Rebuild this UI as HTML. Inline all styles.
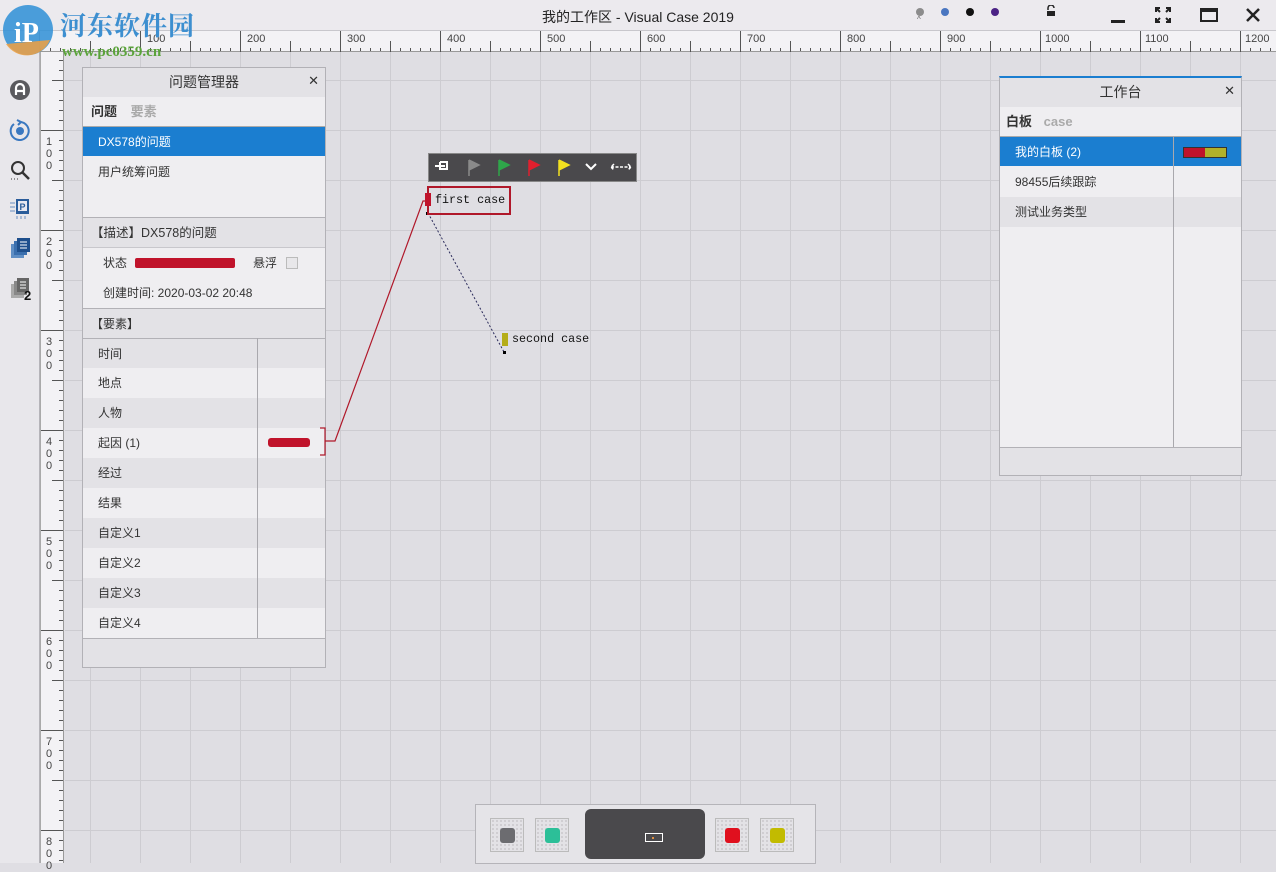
<!DOCTYPE html>
<html><head><meta charset="utf-8">
<style>
*{margin:0;padding:0;box-sizing:border-box}
body{width:1276px;height:863px;overflow:hidden;background:#dfdee3;font-family:"Liberation Sans","Noto Sans CJK SC",sans-serif;font-size:12px;color:#333;position:relative}
.abs{position:absolute}
#title{left:0;top:0;width:1276px;height:31px;background:#eceaee;border-bottom:1px solid #c8c7cc}
#side{left:0;top:31px;width:40px;height:832px;background:#e8e7eb;border-right:1px solid #b5b4b9}
#hr{left:40px;top:31px;width:1236px;height:21px;background:#f3f2f5;border-bottom:1px solid #999;
 background-image:repeating-linear-gradient(90deg,#555 0 1px,transparent 1px 10px);background-size:100% 4px;background-repeat:no-repeat;background-position:0 17px}
#vr{left:40px;top:52px;width:24px;height:811px;background:#f3f2f5;border-right:1px solid #999;border-left:1px solid #aaa}
#canvas{left:65px;top:52px;width:1211px;height:811px;
 background-color:#dfdee3;
 background-image:linear-gradient(90deg,#cdccd1 1px,transparent 1px),linear-gradient(#cdccd1 1px,transparent 1px);
 background-size:50px 50px;background-position:25px 28px}
.panel{background:#efeef1;border:1px solid #b2b1b6;overflow:hidden}
.row{position:absolute;left:0;width:100%;height:30px;line-height:30px;padding-left:15px;font-size:12px}
.alt{background:#e3e2e6}
.sel{background:#1b7ed0;color:#fff}
.hlab{position:absolute;top:33px;font-size:11px;color:#444}
.vlab{position:absolute;left:44px;font-size:11px;color:#444;line-height:12px;width:10px;text-align:center}
.sw{position:absolute;top:818px;width:34px;height:34px;border:1px solid #bbb;background:#e3e2e6;background-image:radial-gradient(#c9c8cc 1px,transparent 1px);background-size:4px 4px}
.sw i{position:absolute;left:9px;top:9px;width:15px;height:15px;border-radius:3px}
.mono{font-family:'Liberation Mono',monospace;font-size:11.7px;color:#111}
</style></head><body>

<div id="title" class="abs">
 <div class="abs" style="left:0;width:1276px;top:7px;text-align:center;font-size:14px;color:#222">我的工作区 - Visual Case 2019</div>
 <div class="abs" style="left:916px;top:8px;width:8px;height:8px;border-radius:50%;background:#8c8c8c"></div>
 <div class="abs" style="left:917px;top:15px;font-size:8px;color:#666">^</div>
 <div class="abs" style="left:941px;top:8px;width:8px;height:8px;border-radius:50%;background:#4a76c0"></div>
 <div class="abs" style="left:966px;top:8px;width:8px;height:8px;border-radius:50%;background:#111"></div>
 <div class="abs" style="left:991px;top:8px;width:8px;height:8px;border-radius:50%;background:#4b2385"></div>
 <svg class="abs" style="left:1045px;top:5px" width="12" height="12"><path d="M3 5V3a3 3 0 0 1 6 0" stroke="#222" stroke-width="1.5" fill="none"/><rect x="2" y="6" width="8" height="5" fill="#222"/></svg>
 <div class="abs" style="left:1111px;top:20px;width:14px;height:3px;background:#222"></div>
 <svg class="abs" style="left:1155px;top:7px" width="16" height="16"><g stroke="#222" stroke-width="2" fill="none"><path d="M1 5V1h4M11 1h4v4M15 11v4h-4M5 15H1v-4M1 1l4 4M15 1l-4 4M15 15l-4-4M1 15l4-4"/></g></svg>
 <div class="abs" style="left:1200px;top:8px;width:18px;height:14px;border:2px solid #222;border-top-width:4px"></div>
 <svg class="abs" style="left:1245px;top:7px" width="16" height="16"><path d="M2 2l12 12M14 2L2 14" stroke="#222" stroke-width="2.5"/></svg>
</div>

<div id="side" class="abs">
 <svg class="abs" style="left:9px;top:48px" width="22" height="22"><circle cx="11" cy="11" r="10" fill="#5a5a5e"/><path d="M7 16V9a4 4 0 0 1 8 0v7M7 12h8" stroke="#fff" stroke-width="2.2" fill="none"/></svg>
 <svg class="abs" style="left:9px;top:88px" width="22" height="22"><path d="M5 5a9 9 0 1 0 6-2" stroke="#3a78c0" stroke-width="2" fill="none"/><path d="M8 1l4 2-3 3" stroke="#3a78c0" stroke-width="2" fill="none"/><circle cx="11" cy="12" r="4" fill="#3a78c0"/></svg>
 <svg class="abs" style="left:9px;top:128px" width="22" height="22"><circle cx="9" cy="9" r="6" stroke="#333" stroke-width="2" fill="none"/><path d="M13 13l7 7" stroke="#333" stroke-width="2.5"/><path d="M2 20h1M5 20h1M8 20h1" stroke="#333"/></svg>
 <svg class="abs" style="left:9px;top:166px" width="22" height="22"><rect x="7" y="2" width="13" height="15" fill="#2a5c9a"/><rect x="9" y="4" width="9" height="10" fill="#e8e8f0"/><text x="10.5" y="13" font-size="9" font-weight="bold" fill="#2a5c9a" font-family="Liberation Sans">P</text><path d="M1 6h5M1 10h5M1 14h5M8 19v3M12 19v3M16 19v3" stroke="#6a8fc0"/></svg>
 <svg class="abs" style="left:9px;top:206px" width="22" height="22"><rect x="2" y="7" width="13" height="14" fill="#5f8ec4"/><rect x="5" y="4" width="13" height="14" fill="#3a6fae"/><rect x="8" y="1" width="13" height="14" fill="#1e4f8c"/><path d="M11 5h7M11 8h7M11 11h7" stroke="#fff"/></svg>
 <svg class="abs" style="left:9px;top:246px" width="26" height="26"><rect x="2" y="7" width="13" height="14" fill="#aaa"/><rect x="5" y="4" width="13" height="14" fill="#888"/><rect x="8" y="1" width="12" height="14" fill="#666"/><path d="M11 5h6M11 8h6M11 11h6" stroke="#fff"/><text x="15" y="23" font-size="13" font-weight="bold" fill="#111" font-family="Liberation Sans">2</text></svg>
</div>

<div id="canvas" class="abs"></div>

<div id="hr" class="abs"></div>
<div class="abs" style="left:40px;top:31px;width:1236px;height:21px;pointer-events:none">
 <div style="position:absolute;left:50px;right:0;top:10px;height:11px;background-image:repeating-linear-gradient(90deg,#555 0 1px,transparent 1px 100px)"></div>
 <div style="position:absolute;left:100px;right:0;top:0;height:21px;background-image:repeating-linear-gradient(90deg,#555 0 1px,transparent 1px 100px)"></div>
</div>
<div class="hlab" style="left:147px">100</div><div class="hlab" style="left:247px">200</div><div class="hlab" style="left:347px">300</div><div class="hlab" style="left:447px">400</div><div class="hlab" style="left:547px">500</div><div class="hlab" style="left:647px">600</div><div class="hlab" style="left:747px">700</div><div class="hlab" style="left:847px">800</div><div class="hlab" style="left:947px">900</div><div class="hlab" style="left:1045px">1000</div><div class="hlab" style="left:1145px">1100</div><div class="hlab" style="left:1245px">1200</div>

<div id="vr" class="abs">
 <div style="position:absolute;top:0;bottom:0;right:0;width:4px;background-image:repeating-linear-gradient(180deg,transparent 0 8px,#555 8px 9px,transparent 9px 10px)"></div>
 <div style="position:absolute;top:0;bottom:0;right:0;width:11px;background-image:repeating-linear-gradient(180deg,transparent 0 28px,#555 28px 29px,transparent 29px 50px)"></div>
 <div style="position:absolute;top:0;bottom:0;left:0;right:0;background-image:repeating-linear-gradient(180deg,transparent 0 78px,#555 78px 79px,transparent 79px 100px)"></div>
</div>
<div class="vlab" style="top:136px">1<br>0<br>0</div><div class="vlab" style="top:236px">2<br>0<br>0</div><div class="vlab" style="top:336px">3<br>0<br>0</div><div class="vlab" style="top:436px">4<br>0<br>0</div><div class="vlab" style="top:536px">5<br>0<br>0</div><div class="vlab" style="top:636px">6<br>0<br>0</div><div class="vlab" style="top:736px">7<br>0<br>0</div><div class="vlab" style="top:836px">8<br>0<br>0</div>

<!-- logo watermark -->
<svg class="abs" style="left:0;top:4px" width="58" height="58"><circle cx="28" cy="26" r="25" fill="#2e8fd6" opacity="0.85"/><path d="M6 40a25 25 0 0 0 44-4z" fill="#f0a040" opacity="0.85"/><text x="14" y="38" font-size="28" fill="#fff" font-weight="bold" font-family="Liberation Serif">iP</text></svg>
<div class="abs" style="left:60px;top:6px;font-size:26px;font-weight:bold;color:#3d8fd0;font-family:'Noto Serif CJK SC',serif;letter-spacing:1px">河东软件园</div>
<div class="abs" style="left:62px;top:44px;font-size:15px;font-weight:bold;color:#5aa33a;font-family:'Liberation Serif',serif">www.pc0359.cn</div>

<!-- problem manager -->
<div class="abs panel" style="left:82px;top:67px;width:244px;height:601px">
 <div class="row" style="top:0;height:29px;background:#e3e2e6;text-align:center;padding:0;font-size:14px;line-height:29px">问题管理器<span style="position:absolute;right:6px;top:-2px;font-size:13px">✕</span></div>
 <div class="row" style="top:29px;font-weight:bold;font-size:13px;padding-left:8px">问题 <span style="color:#aaa;margin-left:10px;font-weight:bold">要素</span></div>
 <div class="row sel" style="top:58px;border-top:1px solid #aaa">DX578的问题</div>
 <div class="row" style="top:89px">用户统筹问题</div>
 <div class="row alt" style="top:149px;border-top:1px solid #b2b1b6;padding-left:8px;font-size:12.5px">【描述】DX578的问题</div>
 <div class="row" style="top:179px;border-top:1px solid #c8c7cc;padding-left:20px">状态<span style="position:absolute;left:52px;top:10px;width:100px;height:10px;background:#c0132b;border-radius:2px"></span><span style="position:absolute;left:170px">悬浮</span><span style="position:absolute;left:203px;top:9px;width:12px;height:12px;border:1px solid #bbb;background:#e8e7ea"></span></div>
 <div class="row" style="top:210px;padding-left:20px">创建时间: 2020-03-02 20:48</div>
 <div class="row alt" style="top:240px;border-top:1px solid #b2b1b6;padding-left:8px">【要素】</div>
 <div class="row alt" style="top:270px;border-top:1px solid #b2b1b6">时间</div>
 <div class="row" style="top:300px">地点</div>
 <div class="row alt" style="top:330px">人物</div>
 <div class="row" style="top:360px">起因 (1)<span style="position:absolute;left:185px;top:10px;width:42px;height:9px;background:#c0132b;border-radius:3px"></span></div>
 <div class="row alt" style="top:390px">经过</div>
 <div class="row" style="top:420px">结果</div>
 <div class="row alt" style="top:450px">自定义1</div>
 <div class="row" style="top:480px">自定义2</div>
 <div class="row alt" style="top:510px">自定义3</div>
 <div class="row" style="top:540px">自定义4</div>
 <div class="abs" style="left:174px;top:270px;width:1px;height:300px;background:#a9a8ad"></div>
 <div class="row alt" style="top:570px;border-top:1px solid #b2b1b6;height:29px"></div>
</div>

<!-- workbench -->
<div class="abs panel" style="left:999px;top:76px;width:243px;height:400px;border-top:2px solid #1b7ed0">
 <div class="row" style="top:0;height:29px;background:#e3e2e6;text-align:center;padding:0;font-size:14px;line-height:29px">工作台<span style="position:absolute;right:6px;top:-2px;font-size:13px">✕</span></div>
 <div class="row" style="top:29px;font-weight:bold;font-size:13px;padding-left:6px">白板 <span style="color:#aaa;margin-left:8px">case</span></div>
 <div class="row sel" style="top:58px;border-top:1px solid #aaa">我的白板 (2)<span style="position:absolute;left:183px;top:10px;width:44px;height:11px;border:1px solid #333;background:linear-gradient(90deg,#c0132b 50%,#b2b12a 50%)"></span></div>
 <div class="row" style="top:89px">98455后续跟踪</div>
 <div class="row alt" style="top:119px">测试业务类型</div>
 <div class="abs" style="left:173px;top:58px;width:1px;height:311px;background:#a9a8ad"></div>
 <div class="row alt" style="top:369px;border-top:1px solid #b2b1b6;height:28px"></div>
</div>

<!-- connection lines -->
<svg class="abs" style="left:0;top:0" width="1276" height="863">
 <path d="M320 428h5v27h-5M325 441h10L423 201h4" stroke="#b0182a" stroke-width="1.2" fill="none"/>
 <path d="M428 213L504 352" stroke="#2a2a5a" stroke-width="1" stroke-dasharray="2,2" fill="none"/>
 <rect x="426" y="212" width="3" height="3" fill="#000"/>
 <rect x="503" y="351" width="3" height="3" fill="#000"/>
</svg>

<!-- toolbar -->
<div class="abs" style="left:428px;top:153px;width:209px;height:29px;background:#4a494c;border:1px solid #888"></div>
<svg class="abs" style="left:428px;top:153px" width="209" height="29">
 <path d="M7 13h10M12 9v8M12 9h7v7h-7" stroke="#fff" stroke-width="2" fill="none"/>
 <path d="M41 7v16M41 7l10 5-10 5" fill="#8a8a8a" stroke="#8a8a8a" stroke-width="1.5"/>
 <path d="M71 7v16M71 7l10 5-10 5" fill="#2fa64a" stroke="#2fa64a" stroke-width="1.5"/>
 <path d="M101 7v16M101 7l10 5-10 5" fill="#e0202e" stroke="#e0202e" stroke-width="1.5"/>
 <path d="M131 7v16M131 7l10 5-10 5" fill="#f2e020" stroke="#f2e020" stroke-width="1.5"/>
 <path d="M158 11l5 5 5-5" stroke="#fff" stroke-width="2" fill="none"/>
 <path d="M183 14h20M186 11l-3 3 3 3M200 11l3 3-3 3" stroke="#fff" stroke-width="1.5" fill="none" stroke-dasharray="3,1.5"/>
</svg>

<div class="abs" style="left:427px;top:186px;width:84px;height:29px;border:2px solid #b0182a"></div>
<div class="abs" style="left:425px;top:193px;width:6px;height:13px;background:#c0132b"></div>
<div class="abs mono" style="left:435px;top:193px">first case</div>
<div class="abs" style="left:502px;top:333px;width:6px;height:13px;background:#b5ad18"></div>
<div class="abs mono" style="left:512px;top:332px">second case</div>

<!-- bottom bar -->
<div class="abs" style="left:475px;top:804px;width:341px;height:60px;background:#e5e4e8;border:1px solid #b5b4b9"></div>
<div class="sw" style="left:490px"><i style="background:#6c6c70"></i></div>
<div class="sw" style="left:535px"><i style="background:#2cbf98"></i></div>
<div class="abs" style="left:585px;top:809px;width:120px;height:50px;background:#4a494c;border-radius:6px"></div>
<div class="abs" style="left:645px;top:833px;width:18px;height:9px;border:1px solid #fff"></div>
<div class="abs" style="left:652px;top:837px;width:2px;height:2px;background:#e09040"></div>
<div class="sw" style="left:715px"><i style="background:#e0101e"></i></div>
<div class="sw" style="left:760px"><i style="background:#c2bb00"></i></div>
</body></html>
